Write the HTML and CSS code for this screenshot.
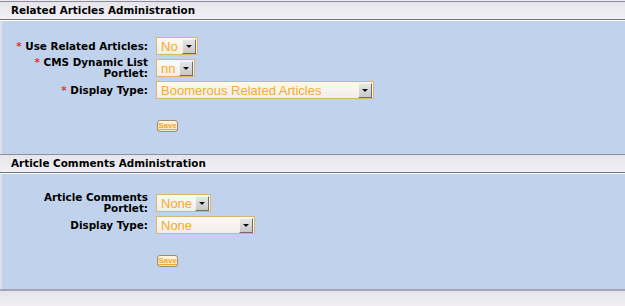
FILE: index.html
```html
<!DOCTYPE html>
<html lang="en">
<head>
    <meta charset="UTF-8">
    <title>Portlet Administration</title>
    <link rel="stylesheet" href="styles.css">
</head>
<body>
    <div class="portlet">
        <div class="portlet-title">Related Articles Administration</div>
        <div class="portlet-body first">
            <div class="form-grid">
                <label class="lbl"><span class="req">*</span> Use Related Articles:</label>
                <div class="sel sel-no"><span class="val">No</span><span class="arrow"></span></div>

                <label class="lbl"><span class="req">*</span> CMS Dynamic List Portlet:</label>
                <div class="sel sel-nn"><span class="val">nn</span><span class="arrow"></span></div>

                <label class="lbl"><span class="req">*</span> Display Type:</label>
                <div class="sel sel-wide"><span class="val">Boomerous Related Articles</span><span class="arrow"></span></div>
            </div>
            <div class="actions"><button class="save">Save</button></div>
        </div>

        <div class="portlet-title">Article Comments Administration</div>
        <div class="portlet-body second">
            <div class="form-grid">
                <label class="lbl">Article Comments Portlet:</label>
                <div class="sel sel-none"><span class="val">None</span><span class="arrow"></span></div>

                <label class="lbl">Display Type:</label>
                <div class="sel sel-mid"><span class="val">None</span><span class="arrow"></span></div>
            </div>
            <div class="actions"><button class="save">Save</button></div>
        </div>
        <div class="portlet-foot"></div>
    </div>
</body>
</html>
```

FILE: styles.css
```css
html, body {
    margin: 0;
    padding: 0;
    background: #eceaf0;
}
body {
    font-family: "DejaVu Sans", Verdana, sans-serif;
    width: 625px;
    height: 306px;
    overflow: hidden;
}
.portlet {
    padding-top: 1px;
}
.portlet-title {
    height: 17px;
    line-height: 17px;
    padding-left: 11px;
    font-size: 10.4px;
    font-weight: bold;
    color: #000;
    border-top: 1px solid #8e8e9c;
    border-bottom: 1px solid #6f7478;
    background: linear-gradient(#e6e6ea, #f2f0f6);
    box-shadow: 0 1px 0 #fff;
}
.portlet-body {
    background: #c1d3ec;
    border-left: 2px solid #dde2ea;
    margin-top: 1px;
}
.portlet-body.first {
    height: 133px;
    padding-top: 16px;
    box-sizing: border-box;
}
.portlet-body.second {
    height: 115px;
    padding-top: 18px;
    box-sizing: border-box;
}
.form-grid {
    display: grid;
    grid-template-columns: 136px auto;
    column-gap: 8px;
    row-gap: 2px;
    align-items: center;
    justify-items: start;
    padding-left: 10px;
}
.lbl {
    justify-self: end;
    text-align: right;
    font-size: 10.4px;
    font-weight: bold;
    line-height: 11px;
    color: #000;
}
.req {
    color: #d83838;
}
.sel {
    display: flex;
    align-items: center;
    justify-content: space-between;
    height: 18px;
    box-sizing: border-box;
    border: 1px solid #d9b66a;
    background: linear-gradient(#fffaf0, #f2ecec);
    font-family: "Liberation Sans", Arial, sans-serif;
    font-size: 13px;
    color: #f2ad2c;
    padding-left: 4px;
}
.sel-no { width: 42px; }
.sel-nn { width: 39px; }
.sel-wide { width: 218px; }
.sel-none { width: 55px; }
.sel-mid { width: 99px; }
.arrow {
    width: 14px;
    height: 15px;
    margin-right: 1px;
    box-sizing: border-box;
    border: 1px solid;
    border-color: #f4f4f4 #6e6e6e #6e6e6e #f4f4f4;
    background: linear-gradient(#e6e6e6, #c8c8c8);
    position: relative;
}
.arrow::after {
    content: "";
    position: absolute;
    left: 3px;
    top: 5px;
    border-left: 3px solid transparent;
    border-right: 3px solid transparent;
    border-top: 3px solid #111;
}
.actions {
    padding-left: 155px;
    margin-top: 21px;
}
.save {
    display: block;
    width: 21px;
    height: 12px;
    padding: 0;
    border: 1px solid #9b8e74;
    border-radius: 3px;
    background: linear-gradient(#fff6de, #f6e6c0);
    font-family: "Liberation Sans", Arial, sans-serif;
    font-size: 8px;
    font-weight: bold;
    line-height: 10px;
    color: #f0a830;
    text-decoration: underline;
}
.portlet-foot {
    border-top: 2px solid #a4a6b8;
    height: 17px;
    background: linear-gradient(#e4e4ea, #f2f0f4);
}
```
